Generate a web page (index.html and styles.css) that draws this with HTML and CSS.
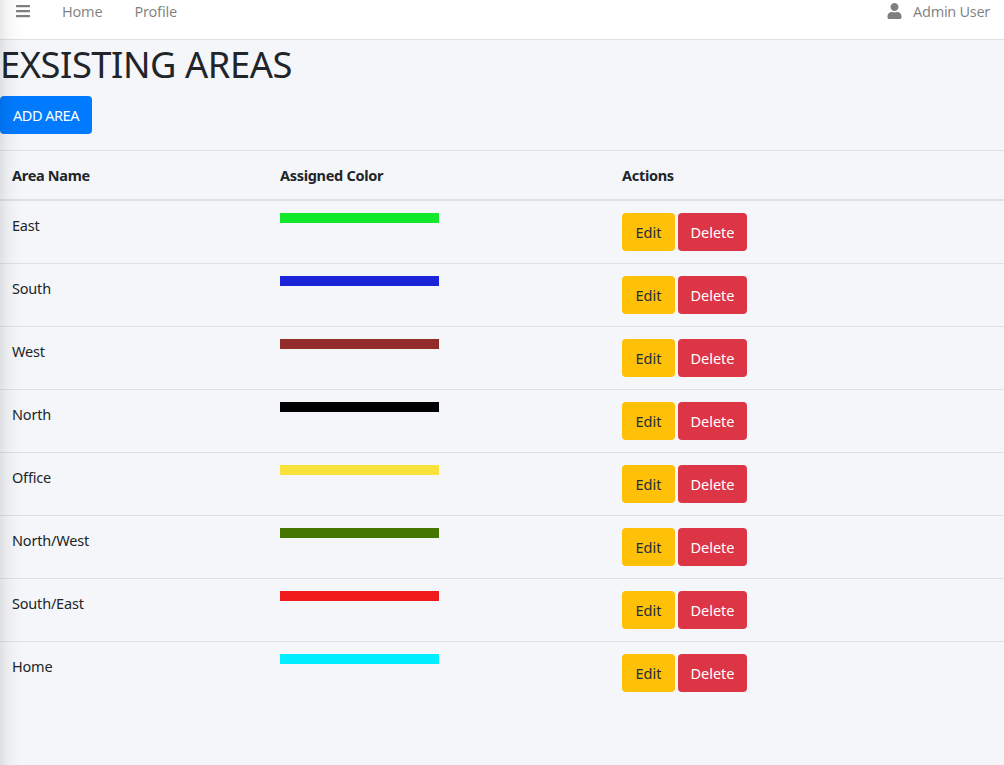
FILE: index.html
```html
<!DOCTYPE html>
<html lang="en">
<head>
    <meta charset="UTF-8">
    <title>Areas</title>
    <link rel="stylesheet" href="styles.css">
</head>
<body>
    <div class="side-shadow"></div>
    <nav class="navbar">
        <svg class="icon-bars" viewBox="0 0 448 512"><path d="M16 132h416c8.837 0 16-7.163 16-16V76c0-8.837-7.163-16-16-16H16C7.163 60 0 67.163 0 76v40c0 8.837 7.163 16 16 16zm0 160h416c8.837 0 16-7.163 16-16v-40c0-8.837-7.163-16-16-16H16c-8.837 0-16 7.163-16 16v40c0 8.837 7.163 16 16 16zm0 160h416c8.837 0 16-7.163 16-16v-40c0-8.837-7.163-16-16-16H16c-8.837 0-16 7.163-16 16v40c0 8.837 7.163 16 16 16z"/></svg>
        <a class="nav-link nav-home" href="#">Home</a>
        <a class="nav-link nav-profile" href="#">Profile</a>
        <div class="nav-user">
            <svg class="icon-user" viewBox="0 0 448 512"><path d="M224 256c70.7 0 128-57.3 128-128S294.7 0 224 0 96 57.3 96 128s57.3 128 128 128zm89.6 32h-16.7c-22.2 10.2-46.9 16-72.9 16s-50.6-5.8-72.9-16h-16.7C60.2 288 0 348.2 0 422.4V464c0 26.5 21.5 48 48 48h352c26.5 0 48-21.5 48-48v-41.6c0-74.2-60.2-134.4-134.4-134.4z"/></svg>
            <a class="nav-link" href="#">Admin User</a>
        </div>
    </nav>

    <div class="content">
        <h1>EXSISTING AREAS</h1>
        <a class="btn btn-add" href="#">ADD AREA</a>

        <table class="areas">
            <thead>
                <tr>
                    <th class="col-name">Area Name</th>
                    <th class="col-color">Assigned Color</th>
                    <th>Actions</th>
                </tr>
            </thead>
            <tbody>
                <tr>
                    <td>East</td>
                    <td><div class="swatch swatch-east"></div></td>
                    <td class="actions"><a class="btn btn-edit" href="#">Edit</a><a class="btn btn-delete" href="#">Delete</a></td>
                </tr>
                <tr>
                    <td>South</td>
                    <td><div class="swatch swatch-south"></div></td>
                    <td class="actions"><a class="btn btn-edit" href="#">Edit</a><a class="btn btn-delete" href="#">Delete</a></td>
                </tr>
                <tr>
                    <td>West</td>
                    <td><div class="swatch swatch-west"></div></td>
                    <td class="actions"><a class="btn btn-edit" href="#">Edit</a><a class="btn btn-delete" href="#">Delete</a></td>
                </tr>
                <tr>
                    <td>North</td>
                    <td><div class="swatch swatch-north"></div></td>
                    <td class="actions"><a class="btn btn-edit" href="#">Edit</a><a class="btn btn-delete" href="#">Delete</a></td>
                </tr>
                <tr>
                    <td>Office</td>
                    <td><div class="swatch swatch-office"></div></td>
                    <td class="actions"><a class="btn btn-edit" href="#">Edit</a><a class="btn btn-delete" href="#">Delete</a></td>
                </tr>
                <tr>
                    <td>North/West</td>
                    <td><div class="swatch swatch-northwest"></div></td>
                    <td class="actions"><a class="btn btn-edit" href="#">Edit</a><a class="btn btn-delete" href="#">Delete</a></td>
                </tr>
                <tr>
                    <td>South/East</td>
                    <td><div class="swatch swatch-southeast"></div></td>
                    <td class="actions"><a class="btn btn-edit" href="#">Edit</a><a class="btn btn-delete" href="#">Delete</a></td>
                </tr>
                <tr>
                    <td>Home</td>
                    <td><div class="swatch swatch-home"></div></td>
                    <td class="actions"><a class="btn btn-edit" href="#">Edit</a><a class="btn btn-delete" href="#">Delete</a></td>
                </tr>
            </tbody>
        </table>
    </div>
</body>
</html>
```

FILE: styles.css
```css
html, body {
    height: 100%;
}

body {
    margin: 0;
    background-color: #f4f6f9;
    color: #212529;
    font-family: "Noto Sans", sans-serif;
    font-size: 14.5px;
    line-height: 24px;
    letter-spacing: -0.2px;
    overflow: hidden;
}

/* sombra da barra lateral escondida */
.side-shadow {
    position: fixed;
    top: 0;
    left: 0;
    bottom: 0;
    width: 24px;
    background: linear-gradient(to right, rgba(0, 0, 0, 0.09), rgba(0, 0, 0, 0.04) 30%, rgba(0, 0, 0, 0.01) 65%, rgba(0, 0, 0, 0));
    pointer-events: none;
}

.navbar {
    display: flex;
    align-items: flex-start;
    height: 39px;
    background-color: #fff;
    border-bottom: 1px solid #dee2e6;
}

.nav-link {
    color: rgba(0, 0, 0, 0.5);
    text-decoration: none;
    line-height: 22px;
}

.icon-bars {
    width: 14px;
    height: 16px;
    margin: 3px 0 0 16px;
    fill: rgba(0, 0, 0, 0.5);
}

.nav-home {
    margin-left: 32px;
}

.nav-profile {
    margin-left: 32px;
}

.nav-user {
    display: flex;
    align-items: flex-start;
    margin-left: auto;
    padding-right: 14px;
    letter-spacing: -0.3px;
}

.icon-user {
    width: 15px;
    height: 16px;
    margin: 3px 11px 0 0;
    fill: rgba(0, 0, 0, 0.5);
}

h1 {
    margin: 0 0 8px;
    font-size: 36.3px;
    font-weight: 400;
    line-height: 48px;
    letter-spacing: -0.45px;
}

.btn {
    display: inline-block;
    height: 38px;
    line-height: 38px;
    border-radius: 4px;
    text-align: center;
    text-decoration: none;
    letter-spacing: 0;
}

.btn-add {
    width: 92px;
    background-color: #007bff;
    color: #fff;
    letter-spacing: -0.5px;
}

.btn-edit {
    width: 53px;
    margin-right: 3px;
    background-color: #ffc107;
    color: #1f2d3d;
}

.btn-delete {
    width: 69px;
    background-color: #dc3545;
    color: #fff;
}

.areas {
    width: 100%;
    margin-top: 16px;
    border-collapse: collapse;
    table-layout: fixed;
}

.areas th,
.areas td {
    padding: 12px;
    border-top: 1px solid #dee2e6;
    text-align: left;
    vertical-align: top;
}

.areas th {
    font-weight: 700;
    letter-spacing: -0.3px;
    border-bottom: 2px solid #dee2e6;
}

.col-name {
    width: 244px;
}

.col-color {
    width: 318px;
}

.swatch {
    width: 159px;
    height: 10px;
}

.actions {
    font-size: 0;
}

.actions .btn {
    font-size: 14.5px;
}

.swatch-east { background-color: #0fe82b; }
.swatch-south { background-color: #1b24d9; }
.swatch-west { background-color: #922b2b; }
.swatch-north { background-color: #000; }
.swatch-office { background-color: #f8e23b; }
.swatch-northwest { background-color: #457700; }
.swatch-southeast { background-color: #f01c1c; }
.swatch-home { background-color: #00eeff; }
```
